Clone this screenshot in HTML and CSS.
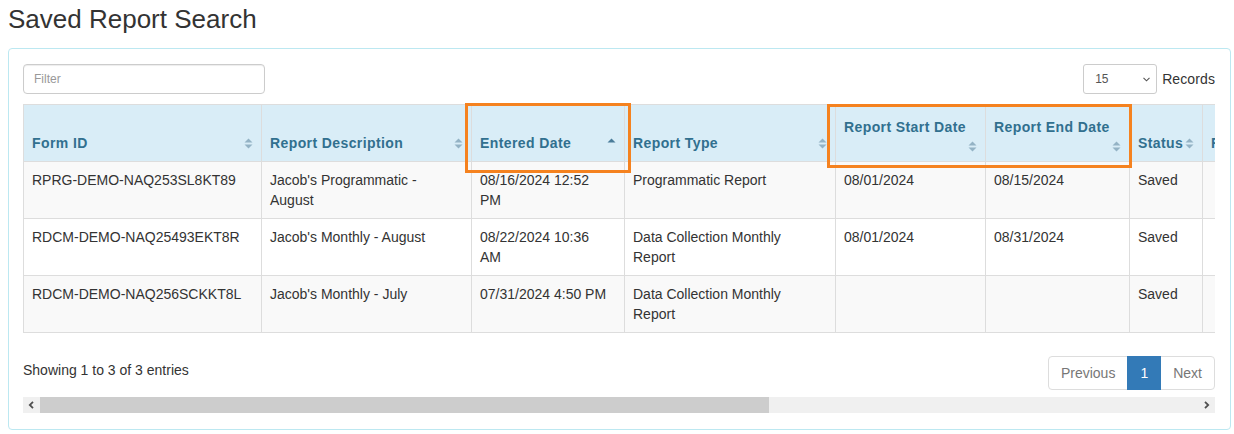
FILE: index.html
```html
<!DOCTYPE html>
<html lang="en">
<head>
<meta charset="utf-8">
<title>Saved Report Search</title>
<link rel="stylesheet" href="styles.css">
</head>
<body>
<div class="page">
  <h3 class="title">Saved Report Search</h3>
  <div class="panel">
    <div class="toolbar">
      <input class="filter" type="text" placeholder="Filter">
      <div class="length">
        <div class="select">
          <span>15</span>
          <svg class="chev" width="7" height="5" viewBox="0 0 7 5"><path d="M0.5 0.8 L3.5 3.8 L6.5 0.8" fill="none" stroke="#555" stroke-width="1.1"/></svg>
        </div>
        <span class="records">Records</span>
      </div>
    </div>

    <div class="table-wrap">
      <table class="grid">
        <colgroup>
          <col class="w-id"><col class="w-desc"><col class="w-entered"><col class="w-type">
          <col class="w-start"><col class="w-end"><col class="w-status"><col class="w-x1">
        </colgroup>
        <thead>
          <tr>
            <th>Form ID<svg class="sort" width="9" height="11" viewBox="0 0 9 11"><path d="M0.5 4.6 L4.5 0.6 L8.5 4.6Z M0.5 6.4 L4.5 10.4 L8.5 6.4Z"/></svg></th>
            <th>Report Description<svg class="sort" width="9" height="11" viewBox="0 0 9 11"><path d="M0.5 4.6 L4.5 0.6 L8.5 4.6Z M0.5 6.4 L4.5 10.4 L8.5 6.4Z"/></svg></th>
            <th>Entered Date<svg class="sort asc" width="9" height="11" viewBox="0 0 9 11"><path d="M0.5 4.6 L4.5 0.6 L8.5 4.6Z"/></svg></th>
            <th>Report Type<svg class="sort" width="9" height="11" viewBox="0 0 9 11"><path d="M0.5 4.6 L4.5 0.6 L8.5 4.6Z M0.5 6.4 L4.5 10.4 L8.5 6.4Z"/></svg></th>
            <th class="two">Report Start Date<svg class="sort" width="9" height="11" viewBox="0 0 9 11"><path d="M0.5 4.6 L4.5 0.6 L8.5 4.6Z M0.5 6.4 L4.5 10.4 L8.5 6.4Z"/></svg></th>
            <th class="two">Report End Date<svg class="sort" width="9" height="11" viewBox="0 0 9 11"><path d="M0.5 4.6 L4.5 0.6 L8.5 4.6Z M0.5 6.4 L4.5 10.4 L8.5 6.4Z"/></svg></th>
            <th>Status<svg class="sort" width="9" height="11" viewBox="0 0 9 11"><path d="M0.5 4.6 L4.5 0.6 L8.5 4.6Z M0.5 6.4 L4.5 10.4 L8.5 6.4Z"/></svg></th>
            <th>Report Period</th>
          </tr>
        </thead>
        <tbody>
          <tr>
            <td>RPRG-DEMO-NAQ253SL8KT89</td>
            <td>Jacob's Programmatic - August</td>
            <td>08/16/2024 12:52 PM</td>
            <td>Programmatic Report</td>
            <td>08/01/2024</td>
            <td>08/15/2024</td>
            <td>Saved</td>
            <td></td>
          </tr>
          <tr>
            <td>RDCM-DEMO-NAQ25493EKT8R</td>
            <td>Jacob's Monthly - August</td>
            <td>08/22/2024 10:36 AM</td>
            <td>Data Collection Monthly Report</td>
            <td>08/01/2024</td>
            <td>08/31/2024</td>
            <td>Saved</td>
            <td></td>
          </tr>
          <tr>
            <td>RDCM-DEMO-NAQ256SCKKT8L</td>
            <td>Jacob's Monthly - July</td>
            <td>07/31/2024 4:50 PM</td>
            <td>Data Collection Monthly Report</td>
            <td></td>
            <td></td>
            <td>Saved</td>
            <td></td>
          </tr>
        </tbody>
      </table>
    </div>

    <div class="footer">
      <div class="info">Showing 1 to 3 of 3 entries</div>
      <ul class="pagination">
        <li class="disabled"><a>Previous</a></li>
        <li class="active"><a>1</a></li>
        <li class="disabled"><a>Next</a></li>
      </ul>
    </div>

    <div class="hscroll">
      <div class="sb-btn">
        <svg width="7" height="8" viewBox="0 0 7 8"><path d="M5 0.8 L1.8 4 L5 7.2" fill="none" stroke="#505050" stroke-width="1.8"/></svg>
      </div>
      <div class="sb-thumb"></div>
      <div class="sb-track"></div>
      <div class="sb-btn">
        <svg width="7" height="8" viewBox="0 0 7 8"><path d="M2 0.8 L5.2 4 L2 7.2" fill="none" stroke="#505050" stroke-width="1.8"/></svg>
      </div>
    </div>
  </div>

  <div class="mark mark-entered"></div>
  <div class="mark mark-range"></div>
</div>
</body>
</html>
```

FILE: styles.css
```css
* { box-sizing: border-box; }

body {
  margin: 0;
  background: #fff;
  color: #333;
  font-family: "Liberation Sans", Arial, Helvetica, sans-serif;
  font-size: 14px;
  line-height: 20px;
}

.page {
  position: relative;
  padding: 0 3px 0 8px;
}

.title {
  margin: 5px 0 15px;
  font-size: 26px;
  font-weight: 400;
  line-height: 28px;
  color: #333;
}

.panel {
  border: 1px solid #bce8f1;
  border-radius: 4px;
  padding: 15px 15px 16px 14px;
}

.toolbar {
  display: flex;
  justify-content: space-between;
  align-items: center;
  height: 30px;
  margin-bottom: 10px;
}

.filter {
  width: 242px;
  height: 30px;
  border: 1px solid #ccc;
  border-radius: 4px;
  padding: 5px 10px;
  font-family: inherit;
  font-size: 12px;
  color: #555;
  box-shadow: inset 0 1px 1px rgba(0,0,0,.075);
  outline: none;
}
.filter::placeholder { color: #999; }

.length {
  display: flex;
  align-items: center;
  gap: 5px;
}

.select {
  width: 74px;
  height: 30px;
  border: 1px solid #ccc;
  border-radius: 3px;
  display: flex;
  align-items: center;
  justify-content: space-between;
  padding: 0 6px 0 11px;
  font-size: 12px;
  color: #555;
}

.records {
  color: #333;
  letter-spacing: 0.1px;
}

.table-wrap {
  width: 100%;
  overflow: hidden;
}

.grid {
  border-collapse: collapse;
  table-layout: fixed;
  width: 1894px;
}

.w-id { width: 238px; }
.w-desc { width: 210px; }
.w-entered { width: 153px; }
.w-type { width: 211px; }
.w-start { width: 150px; }
.w-end { width: 144px; }
.w-status { width: 73px; }
.w-x1 { width: 714px; }

.grid th,
.grid td {
  border: 1px solid #ddd;
  padding: 8px 12px 8px 8px;
  text-align: left;
  vertical-align: top;
}

.grid thead tr { height: 57px; }

.grid th {
  position: relative;
  background: #d9edf7;
  color: #31708f;
  font-weight: 700;
  vertical-align: bottom;
  padding-right: 30px;
  white-space: nowrap;
  letter-spacing: 0.4px;
}

.grid th.two { padding-bottom: 24px; }

.sort {
  position: absolute;
  right: 8px;
  bottom: 12px;
  fill: #94b3c5;
}
.grid th.two .sort { bottom: 9px; }
.sort.asc { fill: #4a7c99; }

.grid tbody tr:nth-child(odd) td { background: #f9f9f9; }

.footer {
  display: flex;
  justify-content: space-between;
  align-items: flex-start;
  margin-top: 23px;
}

.info { padding-top: 4px; }

.pagination {
  display: flex;
  list-style: none;
  margin: 0;
  padding: 0;
}

.pagination a {
  display: block;
  padding: 6px 12px;
  line-height: 20px;
  border: 1px solid #ddd;
  margin-left: -1px;
  color: #777;
  background: #fff;
}
.pagination li:first-child a {
  margin-left: 0;
  border-radius: 4px 0 0 4px;
}
.pagination li:last-child a { border-radius: 0 4px 4px 0; }
.pagination li.active a {
  background: #337ab7;
  border-color: #337ab7;
  color: #fff;
  position: relative;
}

.hscroll {
  display: flex;
  height: 16px;
  margin-top: 7px;
  background: #f0f0f0;
}
.sb-btn {
  width: 17px;
  display: flex;
  align-items: center;
  justify-content: center;
}
.sb-thumb {
  width: 729px;
  background: #cdcdcd;
}
.sb-track { flex: 1; }

.mark {
  position: absolute;
  border: 3px solid #f5821f;
  pointer-events: none;
}
.mark-entered {
  left: 465px;
  top: 98px;
  width: 166px;
  height: 70px;
}
.mark-range {
  left: 827px;
  top: 99px;
  width: 305px;
  height: 64px;
}
```
